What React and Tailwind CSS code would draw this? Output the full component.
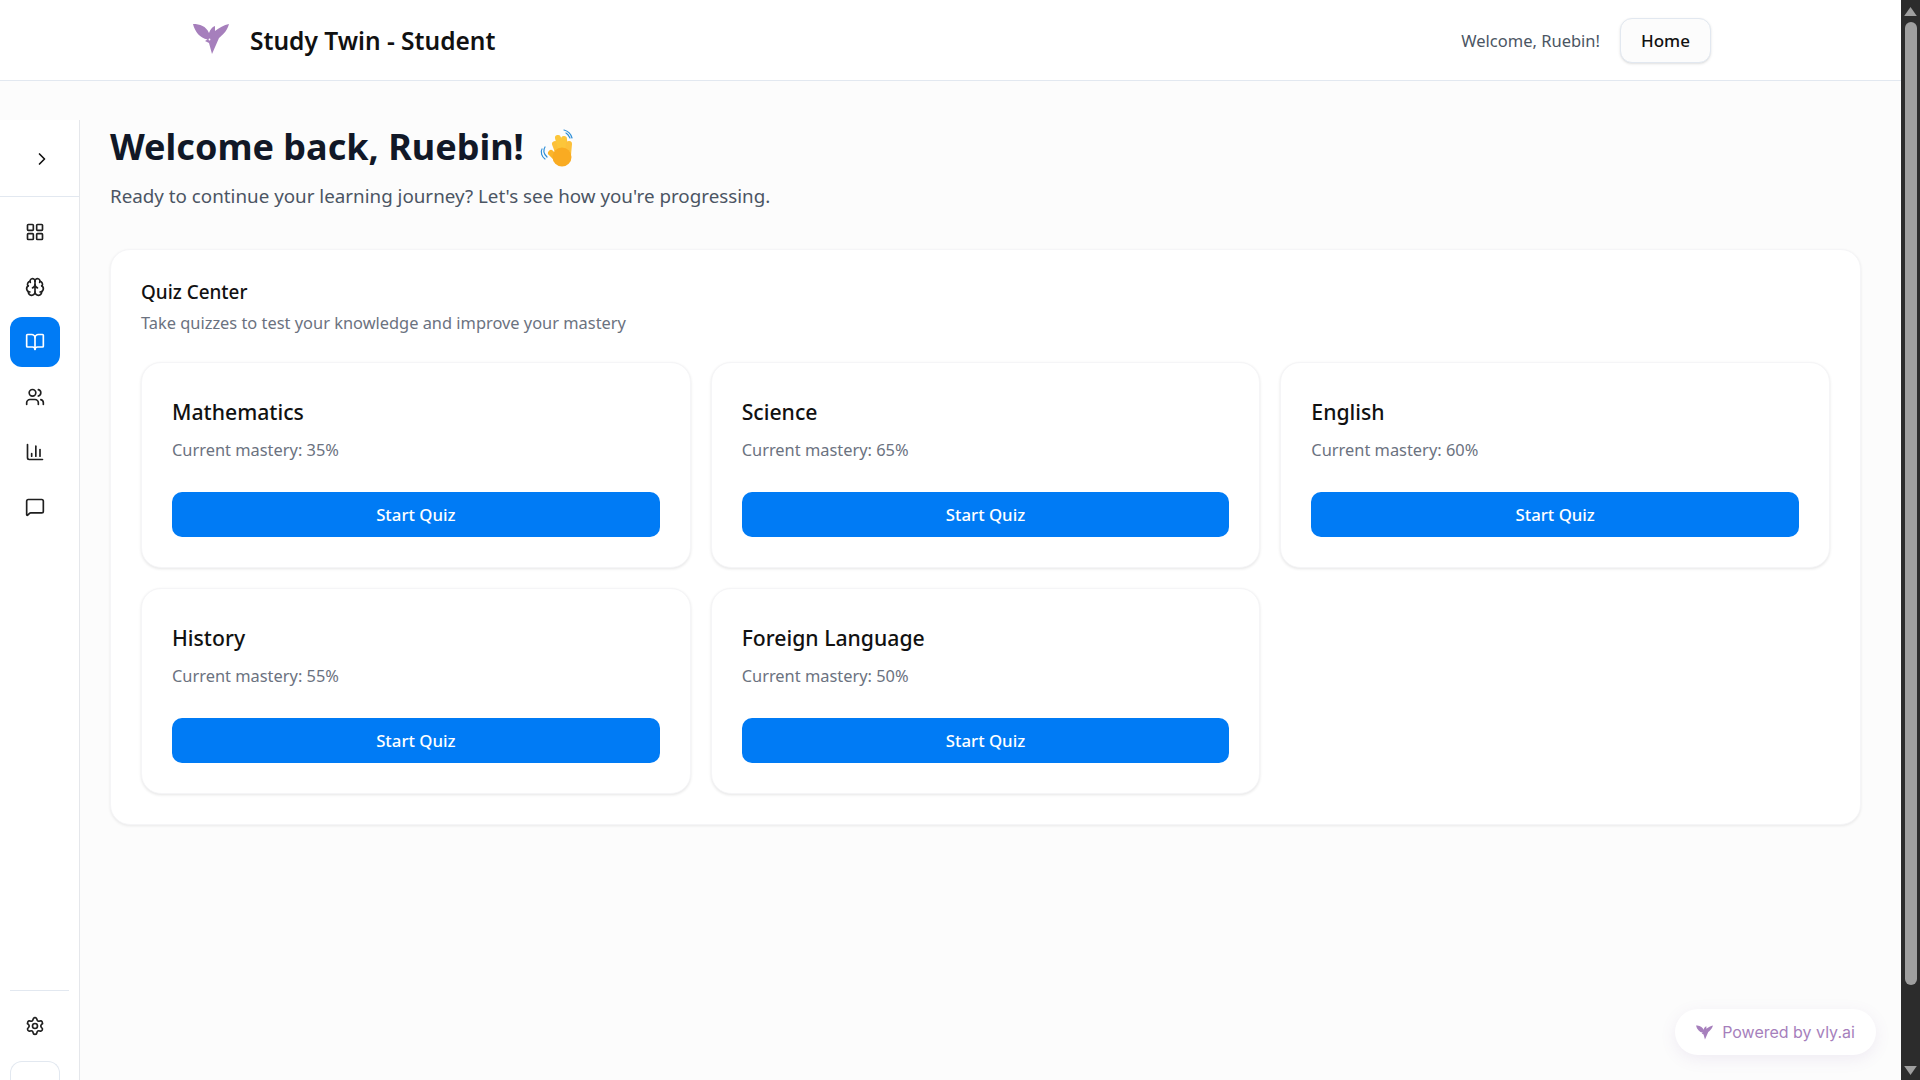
import React from 'react';
import { ChevronRight, LayoutGrid, Brain, BookOpen, Users, BarChart3, MessageSquare, Settings } from 'lucide-react';

const subjects = [
  { name: 'Mathematics', mastery: 35 },
  { name: 'Science', mastery: 65 },
  { name: 'English', mastery: 60 },
  { name: 'History', mastery: 55 },
  { name: 'Foreign Language', mastery: 50 },
];

const navItems = [
  { icon: LayoutGrid },
  { icon: Brain },
  { icon: BookOpen, active: true },
  { icon: Users },
  { icon: BarChart3 },
  { icon: MessageSquare },
];

const Bird = ({ className, eye }) => (
  <svg viewBox="0 0 36 30" className={className} fill="currentColor">
    <path d="M0 0 C7 0 13 2 16 9 C17 6 19 3 22 2 C22 4 22 6 22 7 C26 4 31 1 36 0 C34 8 28 12 26 14 L19 30 L16 19 L12 17 L14.5 15.5 C7 14 2 8 0 0 Z" />
    {eye && <circle cx="16.5" cy="15.5" r="0.9" fill="#fff" />}
  </svg>
);

const Wave = () => (
  <svg viewBox="0 0 50 50" className="w-[50px] h-[50px] ml-[7px] -my-[3px] shrink-0" fill="none" strokeLinecap="round">
    <defs>
      <linearGradient id="hand" x1="0" y1="0" x2="0" y2="1">
        <stop offset="0" stopColor="#fcc63a" />
        <stop offset="1" stopColor="#f59a1c" />
      </linearGradient>
    </defs>
    <path d="M20 31 L26 37" stroke="#fbb52b" strokeWidth="6" />
    <path d="M27 30 L24 22" stroke="#fcc03a" strokeWidth="6" />
    <path d="M31 30 L27 16" stroke="#fcc63a" strokeWidth="6" />
    <path d="M34 30 L33 17" stroke="#fcc63a" strokeWidth="6" />
    <path d="M37 33 L38 22" stroke="#fcc03a" strokeWidth="6" />
    <circle cx="31" cy="35" r="9.5" fill="#f9ab22" />
    <path d="M14 25 C12 28 13 32 16 35 M11 27 C9 30 11 35 14 37" stroke="#2f8fd8" strokeWidth="1.2" />
    <path d="M33 8 C37 9 40 12 41 16 M35 11 C37 12 38 14 39 16" stroke="#2f8fd8" strokeWidth="1.2" />
  </svg>
);

const SubjectCard = ({ name, mastery }) => (
  <div className="bg-white rounded-[20px] border border-[#f5f5f7] shadow-[0_1px_3px_rgba(0,0,0,0.1)] px-[30px] pt-[35px] h-[206px]">
    <h3 className="text-[21.2px] leading-[28px] font-medium text-[#111]">{name}</h3>
    <p className="mt-[12px] text-[16.4px] leading-6 text-[#6b7280]">Current mastery: {mastery}%</p>
    <button className="mt-[30px] w-full h-[45px] rounded-[10px] bg-[#007bf5] text-white text-[16.8px] font-medium">Start Quiz</button>
  </div>
);

const App = () => {
  return (
    <div className="flex h-screen w-full overflow-hidden bg-[#fcfcfc] font-['Noto_Sans',sans-serif]">
      <div className="flex-1 min-w-0 flex flex-col">
        {/* Header */}
        <header className="h-[81px] shrink-0 bg-white border-b border-[#e2e8f0] pl-[193px] pr-[190px] flex items-center justify-between">
          <div className="flex items-center">
            <Bird eye className="w-[36px] h-[30px] text-[#a67fbc] -mt-[2px]" />
            <span className="ml-[21px] mt-[3px] text-[24.5px] font-semibold text-[#111]">Study Twin - Student</span>
          </div>
          <div className="flex items-center gap-5">
            <span className="mt-[3px] text-[16.5px] text-[#4b5563]">Welcome, Ruebin!</span>
            <button className="w-[91px] h-[45px] rounded-[12px] border border-[#e2e8f0] bg-[#fcfcfc] shadow-sm text-[17px] font-medium text-[#111]">
              <span className="relative top-[1px]">Home</span>
            </button>
          </div>
        </header>

        <div className="flex-1 min-h-0 flex pt-[39px]">
          {/* Sidebar */}
          <aside className="w-[80px] shrink-0 bg-white border-r border-[#e5e7eb] flex flex-col">
            <div className="h-[77px] shrink-0 border-b border-[#e2e8f0] flex items-center justify-center pl-[4px] pt-[1px]">
              <ChevronRight className="w-5 h-5 text-[#111]" />
            </div>
            <nav className="flex flex-col items-start gap-[5px] pl-[10px] pt-[10px]">
              {navItems.map((item, i) => {
                const Icon = item.icon;
                return (
                  <div key={i} className={`w-[50px] h-[50px] rounded-[12px] flex items-center justify-center ${item.active ? 'bg-[#007bf5] text-white' : 'text-[#1f1f1f]'}`}>
                    <Icon className="w-5 h-5" />
                  </div>
                );
              })}
            </nav>
            <div className="mt-auto mx-[10px] w-[59px] h-0 border-t border-[#e2e8f0]" />
            <div className="pl-[10px] pt-[10px]">
              <div className="w-[50px] h-[50px] flex items-center justify-center text-[#1f1f1f]">
                <Settings className="w-5 h-5" />
              </div>
            </div>
            <div className="h-[29px] ml-[10px] mt-[10px] -mb-[10px] w-[50px] rounded-t-[12px] border border-b-0 border-[#e2e8f0]" />
          </aside>

          {/* Main */}
          <main className="relative flex-1 min-w-0 pl-[30px] pr-[40px]">
            <h1 className="flex items-center text-[36px] leading-[40px] font-bold text-[#111827] mt-[5px]">
              Welcome back, Ruebin! <Wave />
            </h1>
            <p className="mt-[13px] text-[18.8px] leading-7 text-[#4b5563]">Ready to continue your learning journey? Let's see how you're progressing.</p>

            <section className="mt-[39px] bg-white rounded-[20px] border border-[#f5f5f7] shadow-[0_1px_3px_rgba(0,0,0,0.08)] px-[30px] pt-[30px] pb-[30px]">
              <h2 className="text-[18.9px] leading-6 font-medium text-[#111]">Quiz Center</h2>
              <p className="mt-[7px] text-[16.4px] leading-6 text-[#6b7280]">Take quizzes to test your knowledge and improve your mastery</p>
              <div className="mt-[27px] grid grid-cols-3 gap-5">
                {subjects.map((s) => (
                  <SubjectCard key={s.name} name={s.name} mastery={s.mastery} />
                ))}
              </div>
            </section>

            {/* Badge */}
            <div className="absolute right-[25px] bottom-[25px] h-[46px] w-[201px] rounded-full bg-white shadow-[0_4px_16px_rgba(130,90,170,0.1)] flex items-center justify-center gap-[9px] text-[#a67fbc] text-[16px] font-['Inter',sans-serif]">
              <Bird className="w-[17px] h-[15px]" />
              <span>Powered by vly.ai</span>
            </div>
          </main>
        </div>
      </div>

      {/* Scrollbar */}
      <div className="w-[19px] shrink-0 bg-[#2c2c2c] flex flex-col items-center">
        <svg viewBox="0 0 14 10" className="w-[13px] h-[9px] mt-[7px] text-[#9f9f9f]" fill="currentColor"><path d="M7 0 L14 10 L0 10 Z" /></svg>
        <div className="w-[12px] h-[963px] mt-[6px] rounded-full bg-[#9f9f9f]" />
        <svg viewBox="0 0 14 10" className="w-[13px] h-[9px] mt-auto mb-[5px] text-[#9f9f9f]" fill="currentColor"><path d="M0 0 L14 0 L7 10 Z" /></svg>
      </div>
    </div>
  );
};

export default App;
